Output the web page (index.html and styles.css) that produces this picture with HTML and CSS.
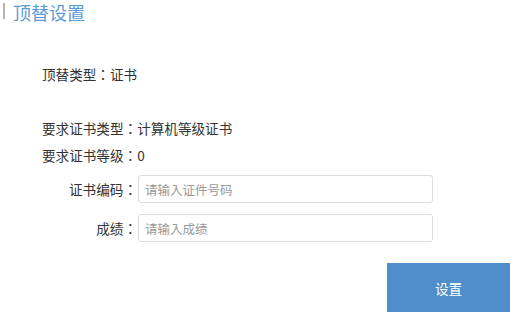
FILE: index.html
```html
<!DOCTYPE html>
<html lang="zh-CN">
<head>
    <meta charset="UTF-8">
    <meta name="viewport" content="width=device-width, initial-scale=1.0">
    <title>顶替设置</title>
    <link rel="stylesheet" href="styles.css">
</head>
<body>
    <h1 class="page-title"><span class="title-bar"></span>顶替设置</h1>

    <div class="info">
        <p class="info-line first">顶替类型：证书</p>
        <p class="info-line second">要求证书类型：计算机等级证书</p>
        <p class="info-line">要求证书等级：0</p>
    </div>

    <div class="form">
        <div class="form-row">
            <label for="certNo">证书编码：</label>
            <input type="text" id="certNo" placeholder="请输入证件号码">
        </div>
        <div class="form-row">
            <label for="score">成绩：</label>
            <input type="text" id="score" placeholder="请输入成绩">
        </div>
    </div>

    <button class="submit-button">设置</button>
</body>
</html>
```

FILE: styles.css
```css
body {
    margin: 0;
    font-family: "Noto Sans CJK JP", "Noto Sans CJK SC", "Liberation Sans", sans-serif;
    font-feature-settings: "locl" 0;
    color: #333;
    background: #fff;
}

.page-title {
    display: flex;
    align-items: flex-start;
    margin: 0 0 0 3px;
    line-height: 25px;
    font-size: 18px;
    font-weight: normal;
    color: #5b9bd5;
}

.title-bar {
    width: 2px;
    height: 16px;
    margin: 3px 8px 0 0;
    background: #b5b5b5;
}

.info {
    margin: 39px 0 0 42px;
}

.info-line {
    margin: 0 0 7px;
    font-size: 13.6px;
    line-height: 20px;
}

.info-line.first {
    margin-bottom: 34px;
}

.form {
    margin-top: 10px;
}

.form-row {
    display: flex;
    align-items: center;
    margin-bottom: 11px;
}

.form-row label {
    width: 137px;
    text-align: right;
    font-size: 13.6px;
    line-height: 20px;
}

.form-row input {
    width: 295px;
    height: 28px;
    margin-left: 1px;
    padding: 0 6px;
    box-sizing: border-box;
    border: 1px solid #ddd;
    border-radius: 3px;
    font-family: inherit;
    font-feature-settings: "locl" 0;
    font-size: 12.5px;
    color: #333;
}

.form-row input::placeholder {
    color: #999;
}

.submit-button {
    display: block;
    margin: 21px 0 0 387px;
    width: 123px;
    height: 49px;
    border: none;
    background: #4f8dcb;
    color: #fff;
    font-family: inherit;
    font-size: 13.6px;
    cursor: pointer;
}
```
